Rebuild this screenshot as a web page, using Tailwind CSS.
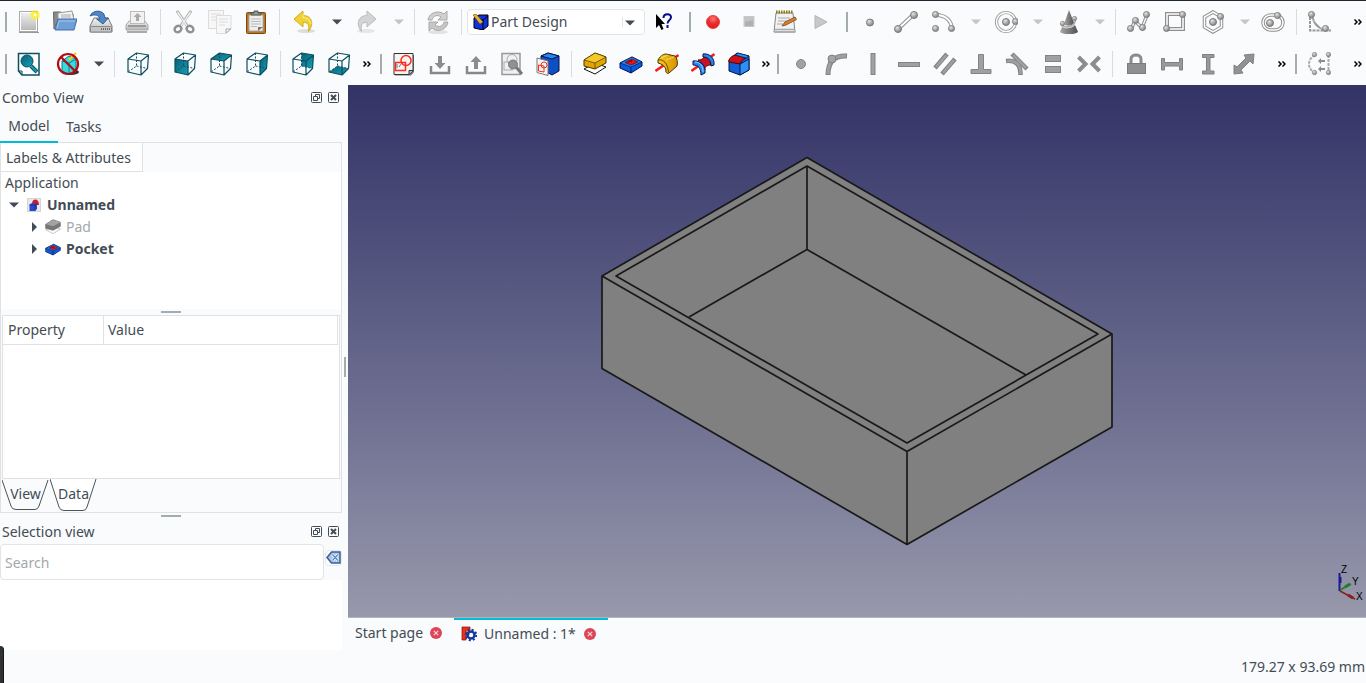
<!DOCTYPE html>
<html lang="en">
<head>
    <meta charset="UTF-8">
    <meta name="viewport" content="width=device-width, initial-scale=1.0">
    <title>Unnamed - FreeCAD</title>
    <script src="https://cdn.jsdelivr.net/npm/@tailwindcss/browser@4"></script>
</head>
<body class="h-screen flex flex-col overflow-hidden bg-[#fafbfd] text-[#434c54] text-[14px] leading-5 font-['Noto_Sans',sans-serif] border-t border-[#20262f]">

    <!-- Shared shapes -->
    <svg width="0" height="0" class="absolute">
        <defs>
            <linearGradient id="teal" x1="0" y1="0" x2="1" y2="1"><stop offset="0" stop-color="#0a5f75"/><stop offset="1" stop-color="#16a0b8"/></linearGradient>
            <linearGradient id="grey" x1="0" y1="0" x2="0" y2="1"><stop offset="0" stop-color="#f4f4f4"/><stop offset="1" stop-color="#b4b4b4"/></linearGradient>
            <linearGradient id="gold" x1="0" y1="0" x2="1" y2="0"><stop offset="0" stop-color="#f8c81e"/><stop offset="1" stop-color="#d69200"/></linearGradient>
            <linearGradient id="cone" x1="0" y1="0" x2="1" y2="0"><stop offset="0" stop-color="#a8a8a8"/><stop offset="1" stop-color="#505050"/></linearGradient>
            <radialGradient id="ballFill" cx=".35" cy=".3" r=".7"><stop offset="0" stop-color="#e6e6e6"/><stop offset="1" stop-color="#838383"/></radialGradient>
            <radialGradient id="redFill" cx=".5" cy=".25" r=".8"><stop offset="0" stop-color="#f77"/><stop offset=".5" stop-color="#ee2a2a"/><stop offset="1" stop-color="#e01818"/></radialGradient>
            <symbol id="ball" viewBox="0 0 8 8" overflow="visible"><circle cx="4" cy="4" r="3.500" fill="url(#ballFill)" stroke="#7c7c7c"/></symbol>
            <symbol id="cube" viewBox="0 0 24 24">
                <g fill="none" stroke="#0c4f60" stroke-linejoin="round"><path d="M2 7L15 9V23L2 20ZM2 7L10.500 1L22.500 3L15 9M22.500 3L21.500 16.500L15 23" stroke-width="1.200"/><path d="M10.500 1V14L2 20M10.500 14L21.500 16.500" stroke-dasharray="2 1.500"/></g>
            </symbol>
            <symbol id="down" viewBox="0 0 10 6"><path d="M0 0.500H10L5 5.500Z" fill="currentColor"/></symbol>
            <symbol id="more" viewBox="0 0 8 6"><path d="M0.500 0.500L3 3L0.500 5.500M4.500 0.500L7 3L4.500 5.500" fill="none" stroke="#000" stroke-width="1.500"/></symbol>
            <symbol id="pocket" viewBox="0 0 24 24"><path d="M1 11L13 5L23 10V14L12 21L1 16Z" fill="#0a5be0" stroke="#06154a"/><path d="M1 11L12 15L23 10L13 5Z" fill="#1687ff" stroke="#06154a" stroke-width=".7"/><path d="M12 15V21" stroke="#06154a"/><path d="M6 10.500L13 7L19 10L12 13Z" fill="#e81414" stroke="#500" stroke-width=".6"/><path d="M7 10.500L13 7.500V10Z" fill="#a00000"/></symbol>
            <symbol id="float" viewBox="0 0 11 11"><rect x=".5" y=".5" width="10" height="10" rx="1" fill="none" stroke="currentColor"/><path d="M4.500 4V2.500H8.500V6.500H7M2.500 4.500H6.500V8.500H2.500Z" fill="none" stroke="currentColor"/></symbol>
            <symbol id="close" viewBox="0 0 11 11"><rect x=".5" y=".5" width="10" height="10" rx="1" fill="none" stroke="currentColor"/><path d="M3 3L8 8M8 3L3 8" stroke="currentColor" stroke-width="2"/></symbol>
            <symbol id="tabclose" viewBox="0 0 12 12"><circle cx="6" cy="6" r="6" fill="#dc4657"/><path d="M3.800 3.800L8.200 8.200M8.200 3.800L3.800 8.200" stroke="#fbd5d8" stroke-width="1.200"/></symbol>
        </defs>
    </svg>

    <!-- Toolbar row 1 -->
    <div class="h-[42px] flex items-center shrink-0">
        <div class="w-[11px] pl-[5px] shrink-0"><div class="w-0.5 h-5 bg-[#a5acaf]"></div></div>
        <button class="w-9 h-9 flex items-center justify-center shrink-0" aria-label="New"><svg class="size-6" viewBox="0 0 24 24"><path d="M2 22.500H22" stroke="#999"/><rect x="2.500" y="1.500" width="18" height="20" fill="url(#grey)" stroke="#aaa"/><rect x="3.500" y="2.500" width="16" height="18" fill="none" stroke="#fff"/><path d="M5 3V20" stroke="#ccc" stroke-dasharray="1 2"/><circle cx="18" cy="5" r="5" fill="#ffee20" opacity=".6"/><circle cx="18" cy="5" r="3" fill="#fff23c"/><circle cx="18" cy="5" r="1.300" fill="#fff"/></svg></button>
        <button class="w-9 h-9 flex items-center justify-center shrink-0" aria-label="Open"><svg class="size-6" viewBox="0 0 24 24"><path d="M1 19L0.500 2H8L9 4H20V10H5Z" fill="#8a8a8a" stroke="#666"/><path d="M5 3L19 1L21 10H5Z" fill="#f2f2f2" stroke="#999"/><path d="M8 5H18M8 7H18" stroke="#aaa"/><path d="M2 20L5 9H24L21 20Z" fill="#6f9fd6" stroke="#3f6fae"/><path d="M4 18L6 11H22" fill="none" stroke="#a6c6ea"/></svg></button>
        <button class="w-9 h-9 flex items-center justify-center shrink-0" aria-label="Save"><svg class="size-6" viewBox="0 0 24 24"><path d="M1 16L5 8H19L23 16V22H1Z" fill="url(#grey)" stroke="#777"/><rect x="1.500" y="16.500" width="21" height="5.500" rx="1" fill="#c4c4c4" stroke="#888"/><path d="M12 19H21" stroke="#666" stroke-width="2" stroke-dasharray="1 1"/><path d="M1 6C3 1 11 -1 15 4L16 8H19.500L14 14L7.500 9H11C10 5 6 4 1 6Z" fill="#4f86c6" stroke="#24508c" stroke-width=".8"/></svg></button>
        <button class="w-9 h-9 flex items-center justify-center shrink-0" aria-label="Print"><svg class="size-6" viewBox="0 0 24 24"><path d="M2 22H22" stroke="#aaa" stroke-width="2"/><path d="M4 11H20L23 15V20H1V15Z" fill="url(#grey)" stroke="#aaa"/><rect x="5.500" y="1.500" width="14" height="12" fill="#f1f1f1" stroke="#bbb"/><path d="M11 11V7H8.500L12.500 3L16.500 7H14V11Z" fill="#aaa"/><path d="M3 16H21" stroke="#888" stroke-width="1.500"/></svg></button>
        <div class="w-[11px] flex justify-center shrink-0"><div class="w-px h-[26px] bg-[#d9dcde]"></div></div>
        <button class="w-9 h-9 flex items-center justify-center shrink-0" aria-label="Cut"><svg class="size-6" viewBox="0 0 24 24" fill="none"><path d="M5 1L16 17M19 1L8 17" stroke="#aaa" stroke-width="3"/><path d="M5.500 2L15 16M18.500 2L9 16" stroke="#eee" stroke-width="1.500"/><ellipse cx="6" cy="19" rx="3.500" ry="3" stroke="#929292" stroke-width="2.500" transform="rotate(-30 6 19)"/><ellipse cx="18" cy="19" rx="3.500" ry="3" stroke="#929292" stroke-width="2.500" transform="rotate(30 18 19)"/></svg></button>
        <button class="w-9 h-9 flex items-center justify-center shrink-0" aria-label="Copy"><svg class="size-6" viewBox="0 0 24 24"><g fill="#f7f7f7" stroke="#dcdcdc"><rect x=".5" y=".5" width="15" height="18"/><path d="M3 4H13M3 7H13M3 10H9" fill="none"/><path d="M8.500 5.500H23V19L18 23.500H8.500Z"/><path d="M11 9H20M11 12H20M11 15H17" fill="none"/><path d="M18 23V19H23Z" stroke="#aaa"/></g></svg></button>
        <button class="w-9 h-9 flex items-center justify-center shrink-0" aria-label="Paste"><svg class="size-6" viewBox="0 0 24 24"><rect x="2.500" y="2.500" width="19" height="21" rx="1" fill="#b97520" stroke="#7c4a0c"/><path d="M5 5H19V21H5Z" fill="#eee" stroke="#aaa"/><path d="M7 9H17M7 11.500H17M7 14H17M7 16.500H13" stroke="#bbb"/><path d="M14 21V17L19 17Z" fill="#777"/><path d="M7 5V3H10V1H14V3H17V5Z" fill="#999" stroke="#555"/></svg></button>
        <div class="w-[11px] flex justify-center shrink-0"><div class="w-px h-[26px] bg-[#d9dcde]"></div></div>
        <button class="w-[62px] h-9 flex items-center pl-2 gap-[15px] shrink-0" aria-label="Undo"><svg class="size-6" viewBox="0 0 24 24"><ellipse cx="13" cy="21" rx="9" ry="2" fill="#ddd"/><path d="M1 9L10 1V5.500C18 5.500 22 13 15.500 21.500C16.500 15 15 12 10 12.500V17Z" fill="#f0d034" stroke="#d2ae1c"/><path d="M10 4V7.500C14 7.500 17 10 18 14" fill="none" stroke="#fbf0a0"/></svg><svg class="w-2.5 h-1.5"><use href="#down"/></svg></button>
        <button class="w-[62px] h-9 flex items-center pl-2 gap-[15px] shrink-0 text-[#c3c6c8]" aria-label="Redo" disabled><svg class="size-6" viewBox="0 0 24 24"><ellipse cx="11" cy="21" rx="9" ry="2" fill="#e6e6e6"/><path d="M21 9L12 1V5.500C4 5.500 0 13 6.500 21.500C5.500 15 7 12 12 12.500V17Z" fill="#d4d4d4" stroke="#bbb"/></svg><svg class="w-2.5 h-1.5"><use href="#down"/></svg></button>
        <div class="w-[11px] flex justify-center shrink-0"><div class="w-px h-[26px] bg-[#d9dcde]"></div></div>
        <button class="w-9 h-9 flex items-center justify-center shrink-0" aria-label="Refresh" disabled><svg class="size-6" viewBox="0 0 24 24"><ellipse cx="12" cy="22" rx="10" ry="2" fill="#e2e2e2"/><path d="M2 10C3 2 13 0 18 4L21 1V10H12L15 7C11 4 7 6 6 10Z" fill="#d0d0d0" stroke="#aaa"/><path d="M22 12C21 20 11 23 6 18L3 21V12H12L9 15C13 18 17 16 18 12Z" fill="#c6c6c6" stroke="#aaa"/></svg></button>
        <div class="w-[11px] flex justify-center shrink-0"><div class="w-px h-[26px] bg-[#d9dcde]"></div></div>
        <div class="relative w-[178px] mr-px shrink-0">
            <select class="appearance-none w-full h-[26px] pl-[23px] bg-white border border-[#e2e4e6] rounded-sm outline-none" aria-label="Workbench"><option>Part Design</option></select>
            <svg class="absolute left-1.5 top-[5px] size-4 pointer-events-none" viewBox="0 0 16 16"><path d="M1 4L6 1H15V12L10 16L1 14Z" fill="#1130e0" stroke="#000"/><path d="M10 6V16M10 6L15 2M3 5L10 6" stroke="#000"/><path d="M0 1L3 0L10 8L7 10Z" fill="#e8b820" stroke="#705000" stroke-width=".6"/></svg>
            <svg class="absolute right-2.5 top-[11px] w-2.5 h-1.5 pointer-events-none"><use href="#down"/></svg>
            <div class="absolute right-[22px] top-2 w-px h-2.5 bg-[#e2e4e6]"></div>
        </div>
        <button class="w-9 h-9 flex items-center justify-center shrink-0" aria-label="What's this?"><svg class="size-6" viewBox="0 0 24 24"><path d="M4 4V18L7 15L9.500 20L11.500 19L9.500 14H13Z" fill="#000"/><path d="M11.500 8C11.500 3 19.500 3 19 7.500C19 10 15.500 10 15.500 13.500M15.500 15V18" fill="none" stroke="#0a0a86" stroke-width="2"/></svg></button>
        <div class="w-[11px] ml-0.5 pl-[5px] shrink-0"><div class="w-0.5 h-5 bg-[#a5acaf]"></div></div>
        <button class="w-9 h-9 flex items-center justify-center shrink-0" aria-label="Record macro"><svg class="size-6" viewBox="0 0 24 24"><circle cx="12" cy="12" r="6.500" fill="url(#redFill)" stroke="#e04848"/></svg></button>
        <button class="w-9 h-9 flex items-center justify-center shrink-0" aria-label="Stop macro" disabled><svg class="size-6" viewBox="0 0 24 24"><rect x="7" y="6.500" width="10" height="10" fill="#c4c4c4" stroke="#c8c8c8"/><path d="M8 12L16 10V16H8Z" fill="#b0b0b0"/></svg></button>
        <button class="w-9 h-9 flex items-center justify-center shrink-0" aria-label="Macros"><svg class="size-6" viewBox="0 0 24 24"><path d="M3 3H20L22 22H1Z" fill="#f1f1f1" stroke="#888"/><path d="M2 19.500H22M1 22H22.500" stroke="#aaa" stroke-width="1.500"/><path d="M3 2H20" stroke="#8e7b16" stroke-width="3" stroke-dasharray="1.500 1"/><path d="M5 8H17M5 11H14M4 14H10" stroke="#aaa"/><path d="M9 16L12 12L22 7L23.500 9.500L13 15Z" fill="#d88032" stroke="#7c4010" stroke-width=".8"/></svg></button>
        <button class="w-9 h-9 flex items-center justify-center shrink-0" aria-label="Run macro" disabled><svg class="size-6" viewBox="0 0 24 24"><path d="M6 5.500V18.500L18 12Z" fill="#c8c8c8" stroke="#b4b4b4"/></svg></button>
        <div class="w-[11px] ml-0.5 pl-[5px] shrink-0"><div class="w-0.5 h-5 bg-[#a5acaf]"></div></div>
        <button class="w-9 h-9 flex items-center justify-center shrink-0" aria-label="Point"><svg class="size-6" viewBox="0 0 24 24"><use href="#ball" x="8" y="8.500" width="8" height="8"/></svg></button>
        <button class="w-9 h-9 flex items-center justify-center shrink-0" aria-label="Line"><svg class="size-6" viewBox="0 0 24 24"><path d="M4 19L20 4" stroke="#8e8e8e" stroke-width="4"/><path d="M4 19L20 4" stroke="#fff" stroke-width="2"/><use href="#ball" x="0" y="15" width="8" height="8"/><use href="#ball" x="16" y="1" width="8" height="8"/></svg></button>
        <button class="w-[62px] h-9 flex items-center pl-2 gap-[15px] shrink-0 text-[#c3c6c8]" aria-label="Arc"><svg class="size-6" viewBox="0 0 24 24"><path d="M4 5C14 5 20 11 20 20" fill="none" stroke="#999" stroke-width="4"/><path d="M4 5C14 5 20 11 20 20" fill="none" stroke="#fff" stroke-width="2"/><use href="#ball" x="0" y="1" width="7" height="7"/><use href="#ball" x="0" y="15" width="7" height="7"/><use href="#ball" x="16" y="15" width="7" height="7"/></svg><svg class="w-2.5 h-1.5"><use href="#down"/></svg></button>
        <button class="w-[62px] h-9 flex items-center pl-2 gap-[15px] shrink-0 text-[#c3c6c8]" aria-label="Circle"><svg class="size-6" viewBox="0 0 24 24"><circle cx="12" cy="12" r="9.500" fill="none" stroke="#999" stroke-width="3.200"/><circle cx="12" cy="12" r="9.500" fill="none" stroke="#fff" stroke-width="1.500"/><use href="#ball" x="8" y="8" width="8" height="8"/><use href="#ball" x="18" y="8" width="7" height="7"/></svg><svg class="w-2.5 h-1.5"><use href="#down"/></svg></button>
        <button class="w-[62px] h-9 flex items-center pl-2 gap-[15px] shrink-0 text-[#c3c6c8]" aria-label="Conic"><svg class="size-6" viewBox="0 0 24 24"><path d="M13 0L18 13C15 17 9 16 8 14Z" fill="url(#cone)"/><path d="M6 17L4 22C8 25 18 25 22 22L19 15C16 19 9 19 6 17Z" fill="url(#cone)"/><path d="M7 12C3 14 6 17 11 17C17 17 20 13 19 9" fill="none" stroke="#aaa" stroke-width="1.500"/><use href="#ball" x="16" y="6" width="5" height="5"/><use href="#ball" x="4" y="11" width="5" height="5"/></svg><svg class="w-2.5 h-1.5"><use href="#down"/></svg></button>
        <div class="w-[11px] flex justify-center shrink-0"><div class="w-px h-[26px] bg-[#d9dcde]"></div></div>
        <button class="w-9 h-9 flex items-center justify-center shrink-0" aria-label="Polyline"><svg class="size-6" viewBox="0 0 24 24"><path d="M4 19L8 11L15 18L20 5" fill="none" stroke="#999" stroke-width="3.500"/><path d="M4 19L8 11L15 18L20 5" fill="none" stroke="#fff" stroke-width="1.200"/><use href="#ball" x="0" y="15" width="7" height="7"/><use href="#ball" x="5" y="7" width="7" height="7"/><use href="#ball" x="12" y="14" width="7" height="7"/><use href="#ball" x="16" y="1" width="7" height="7"/></svg></button>
        <button class="w-9 h-9 flex items-center justify-center shrink-0" aria-label="Rectangle"><svg class="size-6" viewBox="0 0 24 24"><rect x="4" y="4" width="16" height="15" fill="none" stroke="#8e8e8e" stroke-width="4"/><rect x="4" y="4" width="16" height="15" fill="none" stroke="#fff" stroke-width="1.500"/><use href="#ball" x="16" y="1" width="7" height="7"/><use href="#ball" x="0" y="15" width="7" height="7"/></svg></button>
        <button class="w-[62px] h-9 flex items-center pl-2 gap-[15px] shrink-0 text-[#c3c6c8]" aria-label="Polygon"><svg class="size-6" viewBox="0 0 24 24"><path d="M12 2L20.500 7V17L12 22L3.500 17V7Z" fill="none" stroke="#8e8e8e" stroke-width="3.500"/><path d="M12 2L20.500 7V17L12 22L3.500 17V7Z" fill="none" stroke="#fff" stroke-width="1.500"/><use href="#ball" x="8" y="8" width="8" height="8"/><use href="#ball" x="16" y="3" width="7" height="7"/></svg><svg class="w-2.5 h-1.5"><use href="#down"/></svg></button>
        <button class="w-9 h-9 flex items-center justify-center shrink-0" aria-label="Slot"><svg class="size-6" viewBox="0 0 24 24"><rect x="2" y="5" width="20" height="15" rx="7.500" fill="none" stroke="#8e8e8e" stroke-width="3.500"/><rect x="2" y="5" width="20" height="15" rx="7.500" fill="none" stroke="#fff" stroke-width="1.500"/><use href="#ball" x="5" y="9" width="8" height="8"/><use href="#ball" x="13" y="2" width="7" height="7"/></svg></button>
        <div class="w-[11px] flex justify-center shrink-0"><div class="w-px h-[26px] bg-[#d9dcde]"></div></div>
        <button class="w-9 h-9 flex items-center justify-center shrink-0" aria-label="Fillet"><svg class="size-6" viewBox="0 0 24 24"><path d="M2 3V20.500H23" fill="none" stroke="#999" stroke-width="2" stroke-dasharray="3 1"/><path d="M4 4C5 13 10 19 19 20" fill="none" stroke="#999" stroke-width="2"/><path d="M3 8L15 20" stroke="#bbb"/><use href="#ball" x="0" y="1" width="7" height="7"/><use href="#ball" x="14" y="15" width="7" height="7"/></svg></button>
        <button class="ml-auto w-4 h-9 flex items-center justify-center shrink-0" aria-label="More"><svg class="w-2 h-1.5"><use href="#more"/></svg></button>
    </div>

    <!-- Toolbar row 2 -->
    <div class="h-[42px] flex items-center shrink-0">
        <div class="w-[11px] pl-[5px] shrink-0"><div class="w-0.5 h-5 bg-[#a5acaf]"></div></div>
        <button class="w-9 h-9 flex items-center justify-center shrink-0" aria-label="Fit all"><svg class="size-6" viewBox="0 0 24 24"><path d="M1.500 1.500H22V23H5L1.500 19Z" fill="#fff" stroke="#0c4f60" stroke-width="1.500"/><path d="M1.500 19H5V23" fill="none" stroke="#0c4f60"/><path d="M14 14L20 20" stroke="#0c4f60" stroke-width="4"/><path d="M14 14L19.500 19.500" stroke="#16a0b8" stroke-width="2"/><circle cx="10" cy="9" r="6" fill="url(#teal)" stroke="#0c4f60"/></svg></button>
        <button class="w-[62px] h-9 flex items-center pl-[9px] gap-3.5 shrink-0" aria-label="Draw style"><svg class="size-6" viewBox="0 0 24 24"><ellipse cx="15" cy="20" rx="8" ry="3" fill="#333"/><path d="M6 9L13 4L20 7V19L13 22L6 19Z" fill="#35dbe0" stroke="#0a808c"/><path d="M6 9L13 11L20 7M13 11V22" stroke="#0a808c" fill="none"/><path d="M13 8L20 1" stroke="#ffc800" stroke-width="2"/><circle cx="12" cy="12" r="10" fill="none" stroke="#b40a14" stroke-width="2.200"/><path d="M5 5L19 19" stroke="#b40a14" stroke-width="2.200"/></svg><svg class="w-2.5 h-1.5"><use href="#down"/></svg></button>
        <div class="w-[11px] flex justify-center shrink-0"><div class="w-px h-[26px] bg-[#d9dcde]"></div></div>
        <button class="w-9 h-9 flex items-center justify-center shrink-0" aria-label="Isometric"><svg class="size-6"><use href="#cube"/></svg></button>
        <div class="w-[11px] flex justify-center shrink-0"><div class="w-px h-[26px] bg-[#d9dcde]"></div></div>
        <button class="w-9 h-9 flex items-center justify-center shrink-0" aria-label="Front"><svg class="size-6" viewBox="0 0 24 24"><path d="M2 7L15 9V23L2 20Z" fill="url(#teal)"/><use href="#cube" width="24" height="24"/></svg></button>
        <button class="w-9 h-9 flex items-center justify-center shrink-0" aria-label="Top"><svg class="size-6" viewBox="0 0 24 24"><path d="M2 7L10.500 1L22.500 3L15 9Z" fill="url(#teal)"/><use href="#cube" width="24" height="24"/></svg></button>
        <button class="w-9 h-9 flex items-center justify-center shrink-0" aria-label="Right"><svg class="size-6" viewBox="0 0 24 24"><path d="M15 9L22.500 3L21.500 16.500L15 23Z" fill="url(#teal)"/><use href="#cube" width="24" height="24"/></svg></button>
        <div class="w-2.5 flex justify-center shrink-0"><div class="w-px h-[26px] bg-[#d9dcde]"></div></div>
        <button class="w-9 h-9 flex items-center justify-center shrink-0" aria-label="Rear"><svg class="size-6" viewBox="0 0 24 24"><path d="M10.500 1L22.500 3L21.500 16.500L10.500 14Z" fill="url(#teal)"/><use href="#cube" width="24" height="24"/></svg></button>
        <button class="w-9 h-9 flex items-center justify-center shrink-0" aria-label="Bottom"><svg class="size-6" viewBox="0 0 24 24"><path d="M2 20L10.500 14L21.500 16.500L15 23Z" fill="url(#teal)"/><use href="#cube" width="24" height="24"/></svg></button>
        <button class="w-4 h-9 flex items-center justify-center shrink-0" aria-label="More"><svg class="w-2 h-1.5 ml-1"><use href="#more"/></svg></button>
        <div class="w-[11px] ml-0.5 pl-[5px] shrink-0"><div class="w-0.5 h-5 bg-[#a5acaf]"></div></div>
        <button class="w-9 h-9 flex items-center justify-center shrink-0" aria-label="New sketch"><svg class="size-6" viewBox="0 0 24 24"><path d="M3 3H22V20L19 23.500H3Z" fill="#777"/><path d="M2 1.500H21V19L17 22.500H2Z" fill="#f4f4f4" stroke="#333"/><path d="M17 22V18.500H21" fill="#bbb" stroke="#333"/><g fill="none" stroke="#ff2a1a" stroke-width="1.500"><rect x="3.500" y="10.500" width="10" height="8"/><circle cx="14" cy="8.500" r="5"/></g><path d="M5 12V16M9 12L7 15" stroke="#777"/></svg></button>
        <button class="w-9 h-9 flex items-center justify-center shrink-0" aria-label="Edit sketch"><svg class="size-6" viewBox="0 0 24 24"><path d="M3 14V21H21V14" fill="none" stroke="#888" stroke-width="2.500"/><path d="M10 4H14V11H17.500L12 17L6.500 11H10Z" fill="#8c8c8c"/></svg></button>
        <button class="w-9 h-9 flex items-center justify-center shrink-0" aria-label="Leave sketch"><svg class="size-6" viewBox="0 0 24 24"><path d="M3 14V21H21V14" fill="none" stroke="#888" stroke-width="2.500"/><path d="M10 17H14V10H17.500L12 4L6.500 10H10Z" fill="#8c8c8c"/></svg></button>
        <button class="w-9 h-9 flex items-center justify-center shrink-0" aria-label="View sketch"><svg class="size-6" viewBox="0 0 24 24"><path d="M2 1.500H20V22.500H2Z" fill="#f0f0f0" stroke="#999" stroke-width="1.500"/><g fill="none" stroke="#aaa"><rect x="4" y="10" width="8" height="8"/><circle cx="12" cy="7.500" r="5"/></g><path d="M16 15L22 22" stroke="#777" stroke-width="3"/><circle cx="13" cy="12.500" r="4.500" fill="#909090" stroke="#777"/></svg></button>
        <button class="w-9 h-9 flex items-center justify-center shrink-0" aria-label="Map sketch"><svg class="size-6" viewBox="0 0 24 24"><path d="M5 4L12 1L23 4V19L16 23L5 17Z" fill="#0f4fc4" stroke="#06154a"/><path d="M5 4L16 7L23 4L12 1Z" fill="#2c86f0" stroke="#06154a"/><path d="M1 6L12 9V23.500L1 20.500Z" fill="#f6f6f6" stroke="#777"/><g fill="none" stroke="#ff2a1a"><path d="M2.500 13L8 14V20L2.500 19Z"/><circle cx="8" cy="13" r="3"/></g></svg></button>
        <div class="w-[11px] flex justify-center shrink-0"><div class="w-px h-[26px] bg-[#d9dcde]"></div></div>
        <button class="w-9 h-9 flex items-center justify-center shrink-0" aria-label="Pad"><svg class="size-6" viewBox="0 0 24 24"><path d="M1 17L12 11L23 15L12 22Z" fill="#fff" stroke="#111"/><path d="M1 8L12 1L23 5V11L12 17L1 14Z" fill="#e0a600" stroke="#4a3400"/><path d="M1 8L12 1L23 5L12 11Z" fill="#f5c828" stroke="#4a3400" stroke-width=".7"/><path d="M12 11V17" stroke="#4a3400" stroke-width=".7"/></svg></button>
        <button class="w-9 h-9 flex items-center justify-center shrink-0" aria-label="Pocket"><svg class="size-6"><use href="#pocket"/></svg></button>
        <button class="w-9 h-9 flex items-center justify-center shrink-0" aria-label="Revolution"><svg class="size-6" viewBox="0 0 24 24"><path d="M0.500 19L23.500 3" stroke="#f02020" stroke-width="2.500"/><path d="M3 8C6 3 9 2 11 2L20 4C22 6 23 10 22 14L14 21C13 22 10 21 11 18C10 14 7 12 3 11Z" fill="url(#gold)" stroke="#4a3400" stroke-linejoin="round"/><path d="M3 8C8 7 13 11 13.500 20.500" fill="none" stroke="#4a3400" stroke-width=".8"/><path d="M6 6L13 3M11 8L19 5" stroke="#ffe278" stroke-width=".8"/></svg></button>
        <button class="w-9 h-9 flex items-center justify-center shrink-0" aria-label="Groove"><svg class="size-6" viewBox="0 0 24 24"><path d="M0.500 19L23.500 2" stroke="#f02020" stroke-width="2.500"/><path d="M7 8C10 8 13 7 13 4L20 8V13C16 13 13 15 14 18C13 14 11 10 7 8Z" fill="#c81020" stroke="#600" stroke-linejoin="round"/><path d="M2 9C9 8 15 13 14 21L10 23C10 16 7 13 2 13Z" fill="#2c86f0" stroke="#06154a" stroke-linejoin="round"/><path d="M12 2C18 1 24 6 23 13L20 14C20 8 17 5 12 5Z" fill="#2c86f0" stroke="#06154a" stroke-linejoin="round"/><path d="M4 10C9 10 12 14 12 20" fill="none" stroke="#96d0ff"/></svg></button>
        <button class="w-9 h-9 flex items-center justify-center shrink-0" aria-label="Fillet edge"><svg class="size-6" viewBox="0 0 24 24"><path d="M2 8L10 1L22 4V18L13 23L2 19Z" fill="#0f5fd8" stroke="#06154a"/><path d="M13 12L22 7V18L13 23Z" fill="#2c90f4" stroke="#06154a"/><path d="M2 8C4 4 6 4 8 3L19 6C16 7 14 9 13 12L2 10Z" fill="#d01018" stroke="#500"/><path d="M8 3L11 1L22 4L19 6Z" fill="#2c90f4" stroke="#06154a" stroke-width=".7"/></svg></button>
        <button class="w-[13px] h-9 flex items-center justify-center shrink-0" aria-label="More"><svg class="w-2 h-1.5 ml-1"><use href="#more"/></svg></button>
        <div class="w-[11px] ml-0.5 pl-[5px] shrink-0"><div class="w-0.5 h-5 bg-[#a5acaf]"></div></div>
        <button class="w-9 h-9 flex items-center justify-center shrink-0" aria-label="Coincident"><svg class="size-6" viewBox="0 0 24 24"><circle cx="12" cy="12" r="4.500" fill="#a2a2a2" stroke="#868686"/></svg></button>
        <button class="w-9 h-9 flex items-center justify-center shrink-0" aria-label="Point on object"><svg class="size-6" viewBox="0 0 24 24"><path d="M3 23C3 10 9 3 22 4" fill="none" stroke="#848484" stroke-width="5"/><path d="M3 22C3 10 9 3 21 4" fill="none" stroke="#a0a0a0" stroke-width="3"/><circle cx="7" cy="7" r="4" fill="#a4a4a4" stroke="#808080"/></svg></button>
        <button class="w-9 h-9 flex items-center justify-center shrink-0" aria-label="Vertical"><svg class="size-6" viewBox="0 0 24 24"><rect x="10" y="1.500" width="4" height="21" fill="#a0a0a0" stroke="#848484"/></svg></button>
        <button class="w-9 h-9 flex items-center justify-center shrink-0" aria-label="Horizontal"><svg class="size-6" viewBox="0 0 24 24"><rect x="1.500" y="10.500" width="21" height="4" fill="#a0a0a0" stroke="#848484"/></svg></button>
        <button class="w-9 h-9 flex items-center justify-center shrink-0" aria-label="Parallel"><svg class="size-6" viewBox="0 0 24 24"><path d="M2 16L14 2M9 22L22 7" stroke="#848484" stroke-width="4.500"/><path d="M3 15L13.500 3M10 21L21 8" stroke="#a0a0a0" stroke-width="2.500"/></svg></button>
        <button class="w-9 h-9 flex items-center justify-center shrink-0" aria-label="Perpendicular"><svg class="size-6" viewBox="0 0 24 24"><path d="M9.500 2.500H14.500V17.500H22V21.500H2V17.500H9.500Z" fill="#a0a0a0" stroke="#848484"/></svg></button>
        <button class="w-9 h-9 flex items-center justify-center shrink-0" aria-label="Tangent"><svg class="size-6" viewBox="0 0 24 24"><path d="M1 9C11 8 16 13 15.500 23M7 2L22 17" fill="none" stroke="#848484" stroke-width="4.500"/><path d="M2 9C11 8 16 13 15.500 22M8 3L21 16" fill="none" stroke="#a0a0a0" stroke-width="2.500"/></svg></button>
        <button class="w-9 h-9 flex items-center justify-center shrink-0" aria-label="Equal"><svg class="size-6" viewBox="0 0 24 24"><g fill="#a0a0a0" stroke="#848484"><rect x="4.500" y="3.500" width="15" height="6"/><rect x="4.500" y="14.500" width="15" height="6"/></g></svg></button>
        <button class="w-9 h-9 flex items-center justify-center shrink-0" aria-label="Symmetric"><svg class="size-6" viewBox="0 0 24 24"><path d="M1.500 5L8.500 12L1.500 19M22.500 5L15.500 12L22.500 19" fill="none" stroke="#8c8c8c" stroke-width="4"/></svg></button>
        <div class="w-[11px] flex justify-center shrink-0"><div class="w-px h-[26px] bg-[#d9dcde]"></div></div>
        <button class="w-9 h-9 flex items-center justify-center shrink-0" aria-label="Lock"><svg class="size-6" viewBox="0 0 24 24"><path d="M7 12V7C7 1.500 17 1.500 17 7V12" fill="none" stroke="#8c8c8c" stroke-width="3"/><rect x="3.500" y="11.500" width="18" height="10" fill="#8f8f8f" stroke="#7c7c7c"/></svg></button>
        <button class="w-9 h-9 flex items-center justify-center shrink-0" aria-label="Horizontal distance"><svg class="size-6" viewBox="0 0 24 24"><path d="M1.500 6.500H4.500V10.500H19.500V6.500H22.500V18H19.500V14H4.500V18H1.500Z" fill="#9a9a9a" stroke="#808080"/></svg></button>
        <button class="w-9 h-9 flex items-center justify-center shrink-0" aria-label="Vertical distance"><svg class="size-6" viewBox="0 0 24 24"><path d="M6.500 2.500H18V5.500H14V19H18V22H6.500V19H10.500V5.500H6.500Z" fill="#9a9a9a" stroke="#808080"/></svg></button>
        <button class="w-9 h-9 flex items-center justify-center shrink-0" aria-label="Distance"><svg class="size-6" viewBox="0 0 24 24"><path d="M2 22V13L5 15L14 6L12 3L22 2L21 12L18 9L9 18L11 21Z" fill="#929292" stroke="#808080"/></svg></button>
        <button class="w-[26px] h-9 flex items-center justify-end pr-0.5 shrink-0" aria-label="More"><svg class="w-2 h-1.5"><use href="#more"/></svg></button>
        <div class="w-[11px] ml-0.5 pl-[5px] shrink-0"><div class="w-0.5 h-5 bg-[#a5acaf]"></div></div>
        <button class="w-9 h-9 flex items-center justify-center shrink-0" aria-label="Close shape"><svg class="size-6" viewBox="0 0 24 24"><path d="M8 3C0 7 0 17 8 21" fill="none" stroke="#aaa" stroke-width="2" stroke-dasharray="3 1"/><path d="M21.500 3V21" stroke="#aaa" stroke-width="2" stroke-dasharray="3 1"/><path d="M11 9L14 6V8H18V10H14V12ZM11 17L14 14V16H18V18H14V20Z" fill="#8c8c8c"/><use href="#ball" x="5" y="0" width="5" height="5"/><use href="#ball" x="5" y="18" width="5" height="5"/><use href="#ball" x="19" y="0" width="5" height="5"/><use href="#ball" x="19" y="18" width="5" height="5"/></svg></button>
        <button class="ml-auto w-4 h-9 flex items-center justify-center shrink-0" aria-label="More"><svg class="w-2 h-1.5"><use href="#more"/></svg></button>
    </div>

    <main class="flex-1 flex min-h-0">
        <!-- Side docks -->
        <aside class="w-[342px] shrink-0 flex flex-col">
            <div class="h-[25px] flex items-center gap-1.5 pl-0.5 pr-[3px] shrink-0">
                <h2 class="flex-1">Combo View</h2>
                <button aria-label="Float"><svg class="size-[11px]"><use href="#float"/></svg></button>
                <button aria-label="Close"><svg class="size-[11px]"><use href="#close"/></svg></button>
            </div>
            <div class="h-[33px] flex shrink-0 border-b border-[#dfe1e3]">
                <button class="h-[33px] w-[58px] border-b-2 border-[#00bcd4]">Model</button>
                <button class="h-[33px] px-2">Tasks</button>
            </div>
            <div class="h-[370px] flex flex-col border border-t-0 border-[#dfe1e3] shrink-0">
                <div class="flex-1 bg-white">
                    <div class="bg-[#fafbfd] flex"><div class="h-[29px] w-[142px] pt-0.5 pl-[5px] flex items-center bg-white border-r border-b border-[#dfe1e3]">Labels &amp; Attributes</div></div>
                    <ul class="leading-[22px]">
                        <li class="pl-1">Application</li>
                        <li class="pl-2 flex items-center font-bold">
                            <svg class="w-2.5 h-1.5 mr-2"><use href="#down"/></svg>
                            <svg class="size-3.5 mr-1.5" viewBox="0 0 14 14"><rect x=".5" y=".5" width="13" height="13" fill="#e8e8e8" stroke="#d4d4d4"/><path d="M5 6C5 0 12 0 12 7H9Z" fill="#d81818"/><path d="M2.500 6.500L5 5H10V11L8 13H2.500Z" fill="#2a48c8"/><path d="M8 7V13M2.500 7H8L10 5.500" stroke="#102080" stroke-width=".6" fill="none"/></svg>Unnamed
                        </li>
                        <li class="pl-[31px] flex items-center text-[#a4a8ab]">
                            <svg class="w-1.5 h-2.5 mr-[7px] text-[#434c54]" viewBox="0 0 6 10"><path d="M0 0V10L5 5Z" fill="currentColor"/></svg>
                            <svg class="size-4 mr-[5px]" viewBox="0 0 24 24"><path d="M1 16L12 11L23 15L12 22Z" fill="#fff" stroke="#aaa"/><path d="M1 8L12 1L23 5V11L12 17L1 14Z" fill="#777" stroke="#666"/><path d="M1 8L12 1L23 5L12 11Z" fill="#a2a2a2"/></svg>Pad
                        </li>
                        <li class="pl-[31px] flex items-center font-bold">
                            <svg class="w-1.5 h-2.5 mr-[7px]" viewBox="0 0 6 10"><path d="M0 0V10L5 5Z" fill="currentColor"/></svg>
                            <svg class="size-4 mr-[5px]"><use href="#pocket"/></svg>Pocket
                        </li>
                    </ul>
                </div>
                <div class="h-1.5 flex items-center justify-center"><div class="w-5 h-0.5 bg-[#a5acaf]"></div></div>
                <div class="h-[164px] mx-px bg-white border border-[#dfe1e3]">
                    <table class="w-[335px] border-separate border-spacing-0">
                        <thead><tr class="h-[29px] text-left">
                            <th class="w-[101px] p-0 pl-[5px] font-normal border-r border-b border-[#dfe1e3]">Property</th>
                            <th class="p-0 pl-1 font-normal border-r border-b border-[#dfe1e3]">Value</th>
                        </tr></thead>
                    </table>
                </div>
                <div class="h-[33px] pl-px flex items-start gap-px">
                    <button class="relative w-[47px] h-[31px] pb-0.5"><svg class="absolute inset-0 w-[47px] h-[31px]" viewBox="0 0 47 31"><path d="M0 1L9 27Q10 30.500 14 30.500H33Q36 30.500 37 27L46 1" fill="none" stroke="#4a545a"/></svg><span class="relative">View</span></button>
                    <button class="relative w-[47px] h-8 pb-0.5"><svg class="absolute inset-0 w-[47px] h-8" viewBox="0 0 47 32"><path d="M0 0L9 28Q10 31.500 14 31.500H33Q36 31.500 37 28L46 0" fill="#fff" stroke="#4a545a"/></svg><span class="relative">Data</span></button>
                </div>
            </div>
            <div class="h-1.5 flex items-center justify-center shrink-0"><div class="w-5 h-0.5 bg-[#a5acaf]"></div></div>
            <div class="h-[25px] flex items-center gap-1.5 pl-0.5 pr-[3px] shrink-0">
                <h2 class="flex-1">Selection view</h2>
                <button aria-label="Float"><svg class="size-[11px]"><use href="#float"/></svg></button>
                <button aria-label="Close"><svg class="size-[11px]"><use href="#close"/></svg></button>
            </div>
            <div class="flex items-start gap-px shrink-0">
                <input type="text" placeholder="Search" aria-label="Search" class="w-[324px] h-9 px-1 bg-white border border-[#e2e4e6] rounded-sm outline-none placeholder:text-[#a4a8ab]">
                <button class="mt-1.5 w-[17px] h-4 flex items-center justify-center bg-white border border-[#e6e8ea] rounded-sm" aria-label="Clear"><svg class="w-[15px] h-3.5 shrink-0" viewBox="0 0 15 14"><path d="M5.500 1H14V12H5.500L1 6.500Z" fill="#a9c6e8" stroke="#3c5f94" stroke-width="1.500"/><path d="M6.500 3.500L12 9.500M12 3.500L6.500 9.500" stroke="#fff" stroke-width="3"/><path d="M6.500 3.500L12 9.500M12 3.500L6.500 9.500" stroke="#5d8cc8" stroke-width="1.500"/></svg></button>
            </div>
            <div class="h-[70px] bg-white shrink-0"></div>
        </aside>
        <div class="w-1.5 shrink-0 pl-0.5 pt-[272px]"><div class="w-0.5 h-5 bg-[#a5acaf]"></div></div>

        <!-- 3D view -->
        <section class="flex-1 min-w-0 flex flex-col">
            <div class="flex-1 relative flex justify-center bg-linear-to-b from-[#333366] to-[#9898ac] border-b border-[#b4b4bd]">
                <svg class="w-[1018px] h-[532px] shrink-0" viewBox="348 85 1018 532" fill="none" stroke="#191919" stroke-width="1.700" stroke-linejoin="round">
                    <path d="M807 157.500L1112 334V427L907 544.500L602 368.500V276Z" fill="#808080"/>
                    <path d="M602 276L907 451.500L1112 334M907 451.500V544.500"/>
                    <path d="M807 166L1098 334L907 443L616 276Z"/>
                    <path d="M807 166V249.500L689 317M807 249.500L1026 375"/>
                </svg>
                <svg class="absolute right-0 bottom-3 w-7 h-10" viewBox="1338 565 28 40" fill="none">
                    <path d="M1339.500 591V573" stroke="#1c1c8c" stroke-width="2"/><path d="M1340.500 577V583" stroke="#1c1c8c" stroke-width="2"/>
                    <path d="M1340 590L1351 584" stroke="#1e8020" stroke-width="1.500"/><path d="M1345 587L1350 584" stroke="#1e8020" stroke-width="3"/>
                    <path d="M1340 591L1355 599" stroke="#8c1c20" stroke-width="1.500"/><path d="M1348 595L1353 598" stroke="#8c1c20" stroke-width="3"/>
                    <g fill="#000" font-family="Liberation Sans, sans-serif" font-size="10"><text x="1341" y="573">Z</text><text x="1352" y="585">Y</text><text x="1356" y="600">X</text></g>
                </svg>
            </div>
            <div class="h-[31px] flex shrink-0">
                <button class="h-[30px] pl-[7px] pr-3 flex items-center gap-[7px]">Start page <svg class="size-3"><use href="#tabclose"/></svg></button>
                <button class="h-[30px] w-[154px] pl-[7px] flex items-center border-t-2 border-[#00bcd4]">
                    <svg class="size-4 mr-[7px] shrink-0" viewBox="0 0 16 16"><path d="M1 1H9V4H5V6H8V9H5V14H1Z" fill="#f03018" stroke="#801000" stroke-width=".7"/><circle cx="10" cy="9" r="3.500" fill="none" stroke="#123a9c" stroke-width="2.500"/><circle cx="10" cy="9" r="5.200" fill="none" stroke="#123a9c" stroke-width="2" stroke-dasharray="2 2.080"/></svg>
                    <span class="whitespace-nowrap">Unnamed : 1*</span>
                    <svg class="size-3 ml-2 shrink-0"><use href="#tabclose"/></svg>
                </button>
            </div>
        </section>
    </main>

    <footer class="h-[35px] relative shrink-0 flex items-center justify-end pt-0.5 pr-px">
        <div class="absolute left-0 bottom-0 w-1 h-[37px] rounded-tr-sm bg-[#2e3232] border-r border-[#15181a]"></div>
        179.27 x 93.69 mm
    </footer>
</body>
</html>
